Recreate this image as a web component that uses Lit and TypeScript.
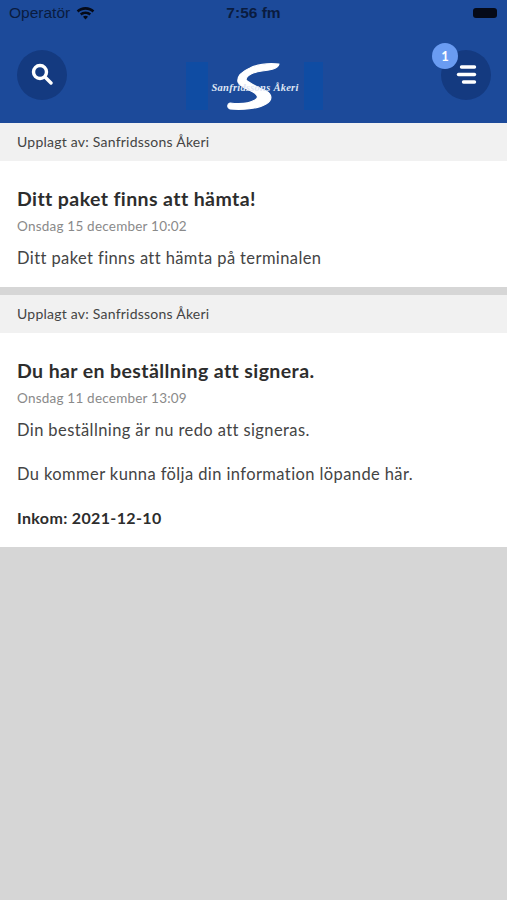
import { LitElement, html, css } from 'lit';
import { customElement } from 'lit/decorators.js';

interface Post {
  author: string;
  title: string;
  date: string;
  body: string[];
  footer?: string;
}

const POSTS: Post[] = [
  {
    author: 'Upplagt av: Sanfridssons Åkeri',
    title: 'Ditt paket finns att hämta!',
    date: 'Onsdag 15 december 10:02',
    body: ['Ditt paket finns att hämta på terminalen'],
  },
  {
    author: 'Upplagt av: Sanfridssons Åkeri',
    title: 'Du har en beställning att signera.',
    date: 'Onsdag 11 december 13:09',
    body: ['Din beställning är nu redo att signeras.', 'Du kommer kunna följa din information löpande här.'],
    footer: 'Inkom: 2021-12-10',
  },
];

@customElement('app-root')
export class AppRoot extends LitElement {
  static styles = css`
    :host {
      display: block;
      min-height: 900px;
      background: #d6d6d6;
      font-family: 'Lato', 'Noto Sans', sans-serif;
      color: #333;
    }

    .header {
      height: 123px;
      box-sizing: border-box;
      background: #1c4a9a;
      display: flex;
      flex-direction: column;
    }

    .status {
      height: 26px;
      display: grid;
      grid-template-columns: 1fr auto 1fr;
      align-items: center;
      padding: 0 9px;
      font-family: 'Liberation Sans', sans-serif;
      font-size: 15.5px;
      color: #0a1c40;
    }

    .status-left {
      display: flex;
      align-items: center;
      gap: 6px;
    }

    .time {
      font-weight: 700;
    }

    .status-right {
      display: flex;
      justify-content: flex-end;
    }

    .battery {
      width: 24px;
      height: 10px;
      border-radius: 3px;
      background: #050a18;
      margin-right: 1px;
    }

    .nav {
      flex: 1;
      display: flex;
      align-items: center;
      justify-content: space-between;
      padding: 0 16px 0 17px;
      margin-top: 1px;
    }

    .round {
      position: relative;
      width: 50px;
      height: 50px;
      border-radius: 50%;
      background: #143a80;
      display: flex;
      align-items: center;
      justify-content: center;
    }

    .search-icon {
      margin: -2px 0 0 -1px;
    }

    .menu-icon {
      margin: -1px 1px 0 0;
    }

    .badge {
      position: absolute;
      left: -9px;
      top: -7px;
      width: 26px;
      height: 26px;
      border-radius: 50%;
      background: #6a9cf2;
      color: #fff;
      font-size: 13px;
      font-weight: 700;
      display: flex;
      align-items: center;
      justify-content: center;
    }

    .logo {
      display: flex;
      align-items: stretch;
      width: 137px;
      height: 48px;
      align-self: flex-end;
      margin-bottom: 13px;
    }

    .logo-side {
      width: 22px;
      background: #0f4ca3;
    }

    .logo-side.right {
      width: 19px;
    }

    .logo-mid {
      flex: 1;
      position: relative;
    }

    .logo-mid svg {
      position: absolute;
      inset: 0;
    }

    .logo-text {
      position: absolute;
      left: 4px;
      top: 20px;
      white-space: nowrap;
      font-family: 'Liberation Serif', serif;
      font-style: italic;
      font-weight: 700;
      font-size: 10.5px;
      letter-spacing: 0.25px;
      color: #dfe6f4;
    }

    .post {
      background: #fff;
      margin-bottom: 8px;
    }

    .author {
      height: 38px;
      box-sizing: border-box;
      padding: 0 0 2px 17px;
      display: flex;
      align-items: center;
      background: #f1f1f1;
      font-size: 14px;
      letter-spacing: 0.23px;
      color: #444;
    }

    .post:first-child .author {
      background: linear-gradient(#e4e4e4, #f1f1f1 40%);
    }

    .content {
      padding: 24px 17px 18px;
    }

    .title {
      margin: 0;
      font-size: 19.5px;
      line-height: 28px;
      font-weight: 700;
      letter-spacing: 0.4px;
      color: #2d2d2d;
    }

    .date {
      font-size: 13.5px;
      line-height: 18px;
      margin-top: 4px;
      letter-spacing: 0.22px;
      color: #8a8a8a;
    }

    .body {
      margin: 12px 0 0;
      font-size: 16.5px;
      line-height: 22px;
      letter-spacing: 0.4px;
      color: #444;
    }

    .body + .body {
      margin-top: 22px;
    }

    .footer {
      margin-top: 22px;
      font-size: 16px;
      line-height: 22px;
      font-weight: 700;
      letter-spacing: 0.35px;
      color: #2d2d2d;
    }
  `;

  private renderPost(p: Post) {
    return html`
      <article class="post">
        <div class="author">${p.author}</div>
        <div class="content">
          <h2 class="title">${p.title}</h2>
          <div class="date">${p.date}</div>
          ${p.body.map((b) => html`<p class="body">${b}</p>`)}
          ${p.footer ? html`<div class="footer">${p.footer}</div>` : ''}
        </div>
      </article>
    `;
  }

  render() {
    return html`
      <header class="header">
        <div class="status">
          <div class="status-left">
            <span>Operatör</span>
            <svg width="19" height="14" viewBox="0 0 19 14" fill="#050a18">
              <path d="M9.5 1C6 1 3 2.3.7 4.500l1.800 2C4.300 4.700 6.800 3.700 9.500 3.700s5.200 1 7 2.800l1.800-2C16 2.300 13 1 9.500 1z" />
              <path d="M9.500 5.400c-2.200 0-4.200.8-5.600 2.200l1.800 2c1-1 2.300-1.500 3.800-1.500s2.800.5 3.800 1.500l1.800-2c-1.400-1.400-3.400-2.200-5.600-2.200z" />
              <path d="M9.500 9.800c-1 0-1.900.4-2.500 1l2.500 2.700 2.500-2.700c-.6-.6-1.500-1-2.500-1z" />
            </svg>
          </div>
          <div class="time">7:56 fm</div>
          <div class="status-right"><div class="battery"></div></div>
        </div>
        <div class="nav">
          <div class="round">
            <svg class="search-icon" width="22" height="22" viewBox="0 0 22 22" fill="none" stroke="#fff" stroke-linecap="round">
              <circle cx="9" cy="9" r="6.500" stroke-width="3.400" />
              <path d="M14.500 14.500 20 20" stroke-width="3.400" />
            </svg>
          </div>
          <div class="logo">
            <div class="logo-side"></div>
            <div class="logo-mid">
              <svg width="96" height="48" viewBox="0 0 96 48" fill="#fff" stroke="#fff" stroke-width="1.200" stroke-linejoin="round">
                <path d="M71 2C60 1 50 2 42 6C33 10 29 15 30 20C33 26 40 27 45 30C50 33 51 36 47 38C40 42 30 42 22 41C19 42 19 46 22 47C34 48 50 47 58 42C65 38 64 32 58 29C52 26 42 22 38 18C38 13 46 10 54 9C62 8 70 7 71 2Z" />
              </svg>
              <div class="logo-text">Sanfridssons Åkeri</div>
            </div>
            <div class="logo-side right"></div>
          </div>
          <div class="round">
            <span class="badge">1</span>
            <svg class="menu-icon" width="22" height="22" viewBox="0 0 22 22" fill="none" stroke="#fff" stroke-width="3.400" stroke-linecap="round">
              <path d="M6.500 3H19.500" />
              <path d="M3.500 10.500H19.500" />
              <path d="M8.500 18H19.500" />
            </svg>
          </div>
        </div>
      </header>
      ${POSTS.map((p) => this.renderPost(p))}
    `;
  }
}
